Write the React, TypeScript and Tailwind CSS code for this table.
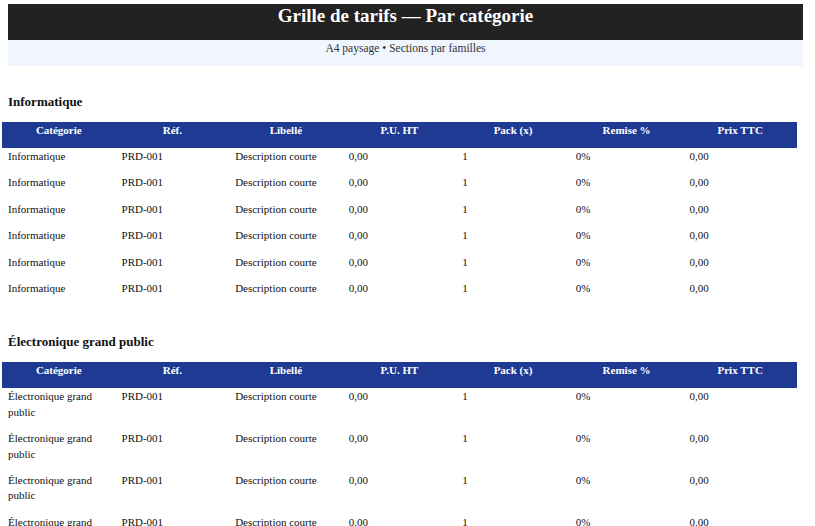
import React from "react";

const headers = ["Catégorie", "Réf.", "Libellé", "P.U. HT", "Pack (x)", "Remise %", "Prix TTC"];

function Section({ title, n }: { title: string; n: number }) {
  const rows = Array.from({ length: n });
  return (
    <section>
      <h3 className="mt-[28px] mb-[12px] text-[13px] leading-[16px] font-bold text-[#111]">{title}</h3>
      <table className="-ml-[6px] w-[795px] table-fixed border-collapse text-[11px]">
        <thead>
          <tr className="bg-[#1f3a93] text-white">
            {headers.map((h) => (
              <th key={h} className="px-[6px] pt-0 pb-[10px] text-center font-bold leading-[16px] align-top">
                {h}
              </th>
            ))}
          </tr>
        </thead>
        <tbody>
          {rows.map((_, i) => (
            <tr key={i} className="text-[#111]">
              {[title, "PRD-001", "Description courte", "0,00", "1", "0%", "0,00"].map((c, j) => (
                <td key={j} className="px-[6px] pt-[1px] pb-[10px] leading-[15.4px] align-top text-left">
                  {c}
                </td>
              ))}
            </tr>
          ))}
        </tbody>
      </table>
    </section>
  );
}

export default function App() {
  return (
    <div
      className="w-[815px] h-[526px] overflow-hidden bg-white pl-[8px] pt-[4px]"
      style={{ fontFamily: '"Liberation Serif", "DejaVu Serif", serif' }}
    >
      <div className="w-[795px]">
        <div className="bg-[#222222] text-white text-center">
          <h1 className="text-[19px] font-bold leading-[24px] pt-0 pb-[12px]">Grille de tarifs — Par catégorie</h1>
        </div>
        <div className="bg-[#f1f5fe] text-center text-[11.5px] leading-[16px] pt-0 pb-[10px] text-[#333]">
          A4 paysage • Sections par familles
        </div>
        <Section title="Informatique" n={6} />
        <Section title="Électronique grand public" n={4} />
      </div>
    </div>
  );
}
